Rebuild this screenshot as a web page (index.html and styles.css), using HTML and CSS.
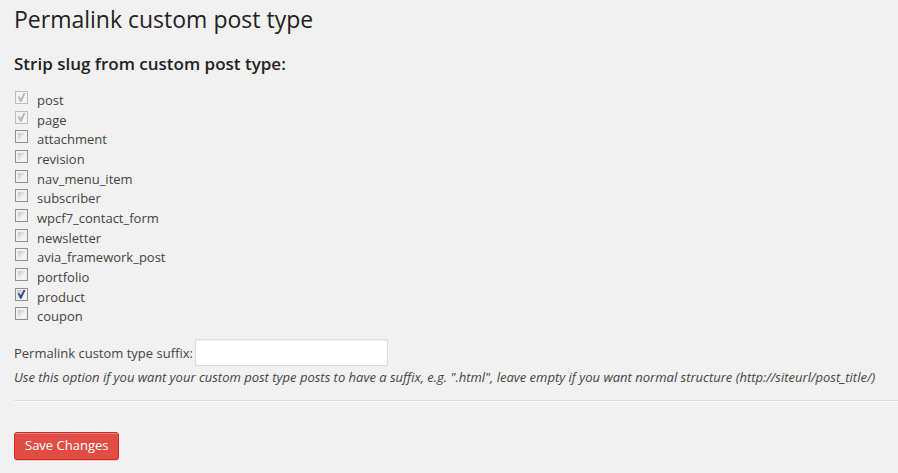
FILE: index.html
```html
<!DOCTYPE html>
<html lang="en">
<head>
<meta charset="utf-8">
<title>Permalink custom post type</title>
<link rel="stylesheet" href="styles.css">
</head>
<body>
<main class="wrap">
<h1 class="title">Permalink custom post type</h1>
<form class="settings">
<fieldset class="types">
<legend class="subtitle">Strip slug from custom post type:</legend>
<div class="list">
<label class="type"><input class="check" type="checkbox" checked disabled>post</label>
<label class="type"><input class="check" type="checkbox" checked disabled>page</label>
<label class="type"><input class="check" type="checkbox">attachment</label>
<label class="type"><input class="check" type="checkbox">revision</label>
<label class="type"><input class="check" type="checkbox">nav_menu_item</label>
<label class="type"><input class="check" type="checkbox">subscriber</label>
<label class="type"><input class="check" type="checkbox">wpcf7_contact_form</label>
<label class="type"><input class="check" type="checkbox">newsletter</label>
<label class="type"><input class="check" type="checkbox">avia_framework_post</label>
<label class="type"><input class="check" type="checkbox">portfolio</label>
<label class="type"><input class="check" type="checkbox" checked>product</label>
<label class="type"><input class="check" type="checkbox">coupon</label>
</div>
</fieldset>
<div class="suffix">
<label for="suffix">Permalink custom type suffix:</label>
<input class="text" id="suffix" type="text" aria-describedby="hint">
</div>
<p class="hint" id="hint">Use this option if you want your custom post type posts to have a suffix, e.g. ".html", leave empty if you want normal structure (http://siteurl/post_title/)</p>
<hr class="rule">
<button class="save" type="submit">Save Changes</button>
</form>
</main>
</body>
</html>
```
FILE: styles.css
```css
* {
  box-sizing: border-box;
}

body {
  margin: 0;
  background: #f1f1f1;
  color: #444;
  font: 13px/20px "Open Sans", sans-serif;
}

.wrap {
  padding: 4px 0 12px 14px;
}

.title {
  margin: 0;
  color: #222;
  font-size: 23px;
  font-weight: 400;
  line-height: 30px;
}

.types {
  margin: 19px 0 0;
  padding: 0;
  border: 0;
}

.subtitle {
  margin-bottom: 16px;
  padding: 0;
  color: #222;
  font-size: 17px;
  font-weight: 600;
  line-height: 22px;
}

.list {
  display: grid;
  grid-auto-rows: 1fr;
  height: 236px;
}

.type {
  display: flex;
  align-items: flex-start;
  gap: 9px;
  width: fit-content;
  line-height: 19px;
}

.check {
  appearance: none;
  flex: none;
  display: grid;
  width: 13px;
  height: 13px;
  margin: 0 0 0 1px;
  padding: 1px;
  border: 1px solid #8e8f8f;
  background: linear-gradient(135deg, #bfc4ca, #f6f6f6 75%) content-box #f4f4f4;
}

.check:not(:checked) {
  padding: 2px;
}

.check:checked::before {
  content: "";
  background: #3c4f94;
  clip-path: polygon(8% 42%, 26% 36%, 42% 62%, 74% 0, 96% 0, 50% 100%, 34% 100%);
}

.check:disabled {
  border-color: #bcbcbc;
  background: #f3f3f3;
}

.check:disabled::before {
  background: #b8b8b8;
}

.suffix {
  display: flex;
  align-items: center;
  gap: 2px;
  margin-top: 12px;
}

.text {
  width: 193px;
  height: 27px;
  padding: 3px 5px;
  border: 1px solid #ddd;
  background: #fff;
  box-shadow: inset 0 1px 2px rgba(0, 0, 0, 0.07);
  font: inherit;
}

.hint {
  margin: 1px 0 0;
  font-style: italic;
}

.rule {
  margin: 13px 0 30px;
  border: 0;
  border-top: 1px solid #ddd;
  border-bottom: 1px solid #fafafa;
}

.save {
  display: block;
  height: 28px;
  padding: 0 10px 2px;
  border: 1px solid #d02a21;
  border-radius: 3px;
  background: #e14d43;
  color: #fff;
  font: inherit;
  box-shadow: inset 0 1px 0 #ec8a85, 0 1px 0 rgba(225, 77, 67, 0.25);
}
```
